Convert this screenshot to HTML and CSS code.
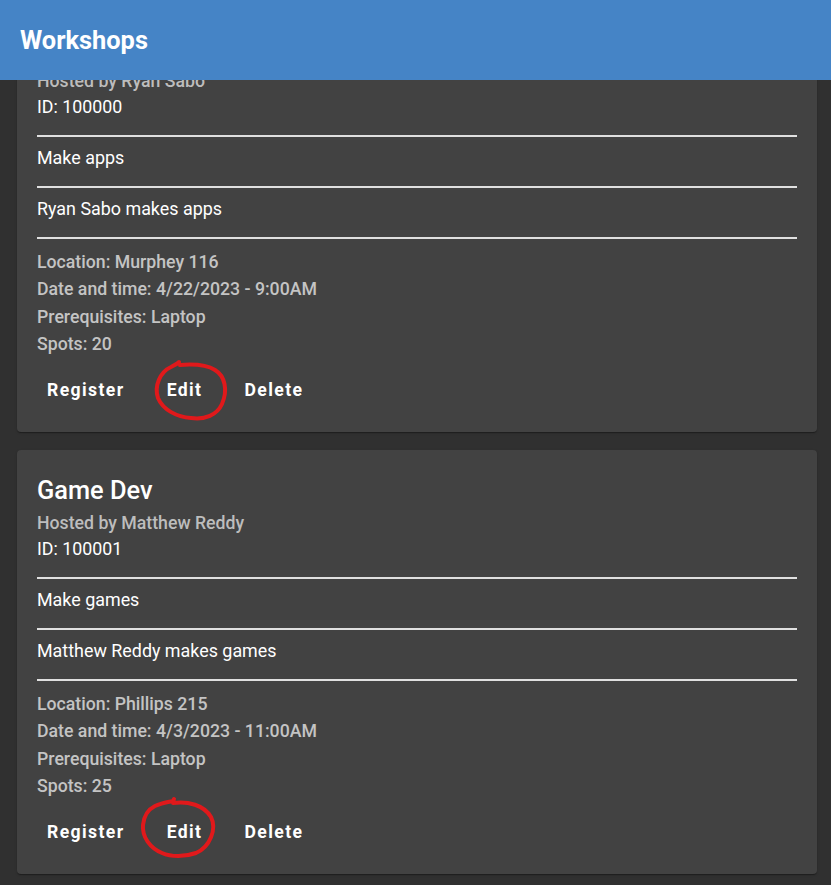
FILE: index.html
```html
<!DOCTYPE html>
<html>
<head>
<meta charset="utf-8">
<title>Workshops</title>
<link rel="stylesheet" href="styles.css">
</head>
<body>
<header class="appbar"><h1 class="appbar-title">Workshops</h1></header>
<main class="list">
  <section class="card">
    <h2 class="card-title">App Dev</h2>
    <div class="host">Hosted by Ryan Sabo</div>
    <div class="id">ID: 100000</div>
    <hr class="divider">
    <p class="text">Make apps</p>
    <hr class="divider">
    <p class="text">Ryan Sabo makes apps</p>
    <hr class="divider">
    <div class="details">
      <div>Location: Murphey 116</div>
      <div>Date and time: 4/22/2023 - 9:00AM</div>
      <div>Prerequisites: Laptop</div>
      <div>Spots: 20</div>
    </div>
    <div class="actions">
      <button class="btn">Register</button>
      <button class="btn">Edit<svg class="mark mark-a" width="84" height="70" viewBox="0 0 84 70"><path d="M30 8 C43 7 57 8 65 13 C75 19 78 33 72 47 C67 58 55 63 41 61 C27 60 13 53 8 41 C4 29 10 15 21 10 C25 8 28 6 29 5" fill="none" stroke="#e0191b" stroke-width="4" stroke-linecap="round" stroke-linejoin="round"/></svg></button>
      <button class="btn">Delete</button>
    </div>
  </section>
  <section class="card">
    <h2 class="card-title">Game Dev</h2>
    <div class="host">Hosted by Matthew Reddy</div>
    <div class="id">ID: 100001</div>
    <hr class="divider">
    <p class="text">Make games</p>
    <hr class="divider">
    <p class="text">Matthew Reddy makes games</p>
    <hr class="divider">
    <div class="details">
      <div>Location: Phillips 215</div>
      <div>Date and time: 4/3/2023 - 11:00AM</div>
      <div>Prerequisites: Laptop</div>
      <div>Spots: 25</div>
    </div>
    <div class="actions">
      <button class="btn">Register</button>
      <button class="btn">Edit<svg class="mark mark-b" width="84" height="70" viewBox="0 0 84 70"><path d="M35 8 C50 6 66 10 73 22 C79 34 72 52 58 58 C47 62 33 62 24 58 C12 53 4 42 5 30 C6 20 11 14 17 11 C23 8 30 7 35 6 L36 4" fill="none" stroke="#e0191b" stroke-width="4" stroke-linecap="round" stroke-linejoin="round"/></svg></button>
      <button class="btn">Delete</button>
    </div>
  </section>
</main>
</body>
</html>
```
FILE: styles.css
```css
* { box-sizing: border-box; }
html, body {
  margin: 0;
  padding: 0;
  background: #303030;
  font-family: Roboto, "Liberation Sans", sans-serif;
  color: #fff;
}
.appbar {
  position: fixed;
  top: 0;
  left: 0;
  right: 0;
  height: 80px;
  background: #4584c6;
  display: flex;
  align-items: center;
  padding-left: 20px;
  z-index: 10;
}
.appbar-title {
  margin: 0;
  font-size: 25.4px;
  font-weight: 700;
  color: #fff;
}
.list {
  display: flex;
  flex-direction: column;
  gap: 18px;
  padding: 8px 14px 8px 17px;
}
.card {
  width: 800px;
  background: #424242;
  border-radius: 4px;
  box-shadow: 0 2px 1px -1px rgba(0,0,0,0.2), 0 1px 1px 0 rgba(0,0,0,0.14), 0 1px 3px 0 rgba(0,0,0,0.12);
  padding: 24px 20px 24px;
}
.card-title {
  margin: 0 0 4px;
  font-size: 25.4px;
  line-height: 32px;
  font-weight: 500;
}
.host {
  margin-top: 2px;
  font-size: 17.7px;
  line-height: 26px;
  font-weight: 500;
  color: #bdbdbd;
}
.id {
  font-size: 17.8px;
  line-height: 26px;
}
.divider {
  margin: 15px 0 0;
  border: 0;
  height: 2px;
  background: #e0e0e0;
}
.text {
  margin: 8px 0 0;
  font-size: 17.9px;
  line-height: 26px;
}
.details {
  margin-top: 10px;
  font-size: 17.7px;
  line-height: 27.3px;
  font-weight: 500;
  color: #c4c4c4;
}
.actions {
  margin-top: 14px;
  display: flex;
  gap: 22px;
}
.btn {
  position: relative;
  height: 36px;
  padding: 0 10px;
  background: none;
  border: 0;
  color: #fff;
  font-family: Roboto, "Liberation Sans", sans-serif;
  font-size: 17.6px;
  font-weight: 700;
  letter-spacing: 1.4px;
}
.mark {
  position: absolute;
  pointer-events: none;
}
.mark-a { left: -7px; top: -15px; }
.mark-b { left: -19px; top: -19px; }
```
